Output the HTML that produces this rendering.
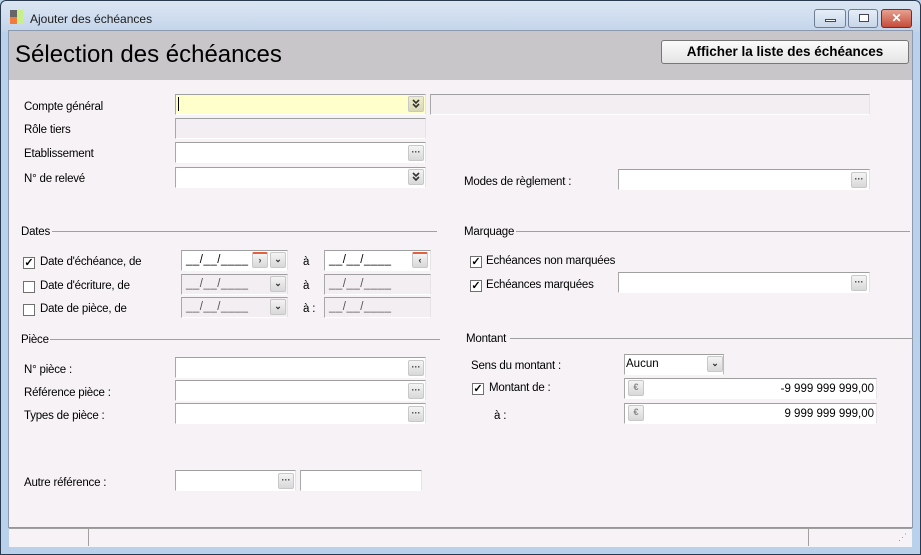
<!DOCTYPE html>
<html><head><meta charset="utf-8"><style>
*{margin:0;padding:0;box-sizing:border-box}
body{width:921px;height:555px;position:relative;overflow:hidden;background:#b9d1ea;font-family:"Liberation Sans",sans-serif;font-size:11.5px;color:#000}
.a{position:absolute}
.frame{left:0;top:0;width:921px;height:555px;border:1px solid #2a3a4e;border-radius:6px 6px 0 0;background:linear-gradient(#dbe6f3,#c4d5ea 30px,#b9d1ea 31px)}
.body{left:8px;top:30px;width:905px;height:498px;background:#f6f2f6;border:1px solid #8a99ad}
.head{left:9px;top:31px;width:903px;height:49px;background:#c8c6c8}
.lbl{position:absolute;white-space:nowrap;letter-spacing:-0.2px;margin-top:2px}
.f{position:absolute;height:21px;background:#fff;border-top:1px solid #a0a0a0;border-left:1px solid #a8a8a8;border-right:1px solid #e6e2e6;border-bottom:1px solid #fff}
.dis{background:#f2eef2}
.btn{position:absolute;width:16px;height:16px;border:1px solid #c8c8c8;border-radius:2px;background:linear-gradient(#f4f4f4,#d8d8d8);font-size:9px;line-height:12px;text-align:center;color:#333;font-weight:bold}
.sep{position:absolute;height:1px;background:#a0a0a0}
.cb{position:absolute;width:12px;height:12px;border:1px solid #707070;background:#fff;font-size:11px;line-height:10px;text-align:center;font-weight:bold;margin-top:2px}
.date{position:absolute;left:4px;top:3px;letter-spacing:0.5px}
.wb{position:absolute;top:9px;height:19px;border:1px solid #6e7e92;border-radius:3px;background:linear-gradient(#e6eef8,#c8d6e8)}
</style></head><body>
<div class="a frame"></div>
<div class="a" style="left:10px;top:10px;width:7px;height:7px;background:#666"></div>
<div class="a" style="left:10px;top:17px;width:7px;height:7px;background:#f07c3c"></div>
<div class="a" style="left:17px;top:10px;width:6px;height:14px;background:#c8f08a"></div>
<div class="a" style="left:30px;top:12px;font-size:12px;color:#1a1a1a;white-space:nowrap">Ajouter des échéances</div>
<div class="wb" style="left:814px;width:32px"><div class="a" style="left:10px;top:9px;width:11px;height:3px;background:#fff;border:1px solid #445"></div></div>
<div class="wb" style="left:848px;width:30px"><div class="a" style="left:10px;top:4px;width:10px;height:8px;border:1px solid #445;background:#fff"></div></div>
<div class="wb" style="left:881px;width:31px;background:linear-gradient(#e8a090,#c44c3a);border-color:#7a2a20"><div class="a" style="left:0;top:1px;width:29px;text-align:center;color:#fff;font-weight:bold;font-size:12px">✕</div></div>
<div class="a body"></div>
<div class="a head"></div>
<div class="a" style="left:15px;top:41px;font-size:24px;white-space:nowrap">Sélection des échéances</div>
<div class="a" style="left:661px;top:40px;width:248px;height:24px;border:1px solid #777;border-radius:3px;background:linear-gradient(#fbfbfb,#e4e4e4);text-align:center;font-weight:bold;font-size:13.5px;line-height:22px">Afficher la liste des échéances</div>

<div class="lbl" style="left:24px;top:99px">Compte général</div>
<div class="f" style="left:175px;top:94px;width:251px;background:#ffffcc"><div class="a" style="left:2px;top:2px;width:1px;height:14px;background:#000"></div><div class="btn" style="left:232px;top:1px;background:linear-gradient(#eeeecc,#d8d8b8)"><svg width="14" height="14" viewBox="0 0 14 14"><path d="M4 3l3 3 3-3M4 7l3 3 3-3" fill="none" stroke="#333" stroke-width="1.6"/></svg></div></div>
<div class="f dis" style="left:430px;top:94px;width:440px"></div>
<div class="lbl" style="left:24px;top:122px">Rôle tiers</div>
<div class="f dis" style="left:175px;top:118px;width:251px"></div>
<div class="lbl" style="left:24px;top:146px">Etablissement</div>
<div class="f" style="left:175px;top:142px;width:251px"><div class="btn" style="left:232px;top:2px">···</div></div>
<div class="lbl" style="left:24px;top:171px">N° de relevé</div>
<div class="f" style="left:175px;top:167px;width:251px"><div class="btn" style="left:232px;top:1px"><svg width="14" height="14" viewBox="0 0 14 14"><path d="M4 3l3 3 3-3M4 7l3 3 3-3" fill="none" stroke="#333" stroke-width="1.6"/></svg></div></div>
<div class="lbl" style="left:464px;top:174px">Modes de règlement :</div>
<div class="f" style="left:618px;top:169px;width:252px"><div class="btn" style="left:232px;top:2px">···</div></div>

<div class="lbl" style="left:21px;top:224px">Dates</div><div class="sep" style="left:52px;top:231px;width:385px"></div>
<div class="cb" style="left:23px;top:255px">✓</div><div class="lbl" style="left:40px;top:254px">Date d'échéance, de</div>
<div class="f" style="left:181px;top:250px;width:107px"><span class="date">__/__/____</span><div class="btn" style="left:70px;top:1px;color:#444;border-top:2px solid #e06040">›</div><div class="btn" style="left:88px;top:1px">⌄</div></div>
<div class="lbl" style="left:303px;top:254px">à</div>
<div class="f" style="left:324px;top:250px;width:107px"><span class="date">__/__/____</span><div class="btn" style="left:87px;top:1px;border-top:2px solid #e06040">‹</div></div>
<div class="cb" style="left:23px;top:279px"></div><div class="lbl" style="left:40px;top:278px">Date d'écriture, de</div>
<div class="f dis" style="left:181px;top:274px;width:107px"><span class="date" style="color:#555">__/__/____</span><div class="btn" style="left:88px;top:1px">⌄</div></div>
<div class="lbl" style="left:303px;top:278px">à</div>
<div class="f dis" style="left:324px;top:274px;width:107px"><span class="date" style="color:#555">__/__/____</span></div>
<div class="cb" style="left:23px;top:302px"></div><div class="lbl" style="left:40px;top:301px">Date de pièce, de</div>
<div class="f dis" style="left:181px;top:297px;width:107px"><span class="date" style="color:#555">__/__/____</span><div class="btn" style="left:88px;top:1px">⌄</div></div>
<div class="lbl" style="left:303px;top:301px">à :</div>
<div class="f dis" style="left:324px;top:297px;width:107px"><span class="date" style="color:#555">__/__/____</span></div>

<div class="lbl" style="left:21px;top:332px">Pièce</div><div class="sep" style="left:50px;top:339px;width:390px"></div>
<div class="lbl" style="left:24px;top:362px">N° pièce :</div>
<div class="f" style="left:175px;top:357px;width:251px"><div class="btn" style="left:232px;top:2px">···</div></div>
<div class="lbl" style="left:24px;top:385px">Référence pièce :</div>
<div class="f" style="left:175px;top:380px;width:251px"><div class="btn" style="left:232px;top:2px">···</div></div>
<div class="lbl" style="left:24px;top:408px">Types de pièce :</div>
<div class="f" style="left:175px;top:403px;width:251px"><div class="btn" style="left:232px;top:2px">···</div></div>
<div class="lbl" style="left:24px;top:475px">Autre référence :</div>
<div class="f" style="left:175px;top:470px;width:121px"><div class="btn" style="left:102px;top:2px">···</div></div>
<div class="f" style="left:300px;top:470px;width:122px"></div>

<div class="lbl" style="left:464px;top:224px">Marquage</div><div class="sep" style="left:516px;top:231px;width:394px"></div>
<div class="cb" style="left:470px;top:254px">✓</div><div class="lbl" style="left:486px;top:253px">Echéances non marquées</div>
<div class="cb" style="left:470px;top:278px">✓</div><div class="lbl" style="left:486px;top:277px">Echéances marquées</div>
<div class="f" style="left:618px;top:272px;width:252px"><div class="btn" style="left:232px;top:2px">···</div></div>

<div class="lbl" style="left:466px;top:331px">Montant</div><div class="sep" style="left:510px;top:338px;width:403px"></div>
<div class="lbl" style="left:471px;top:358px">Sens du montant :</div>
<div class="f" style="left:624px;top:354px;width:100px;border-right-color:#bbb"><span class="a" style="left:1px;top:3px">Aucun</span><div class="btn" style="left:82px;top:1px">⌄</div></div>
<div class="cb" style="left:472px;top:381px">✓</div><div class="lbl" style="left:489px;top:380px">Montant de :</div>
<div class="f" style="left:624px;top:378px;width:253px"><div class="btn" style="left:3px;top:1px;color:#888">€</div><span class="a" style="right:2px;top:4px">-9 999 999 999,00</span></div>
<div class="lbl" style="left:494px;top:408px">à :</div>
<div class="f" style="left:624px;top:403px;width:253px"><div class="btn" style="left:3px;top:1px;color:#888">€</div><span class="a" style="right:2px;top:4px">9 999 999 999,00</span></div>

<div class="a" style="left:9px;top:528px;width:903px;height:19px;background:#f6f2f6;border-top:1px solid #a0a0a0"></div>
<div class="a" style="left:88px;top:529px;width:1px;height:17px;background:#a0a0a0"></div>
<div class="a" style="left:808px;top:529px;width:1px;height:17px;background:#a0a0a0"></div>
<div class="a" style="left:898px;top:532px;font-size:9px;color:#999">⋰</div>
</body></html>
